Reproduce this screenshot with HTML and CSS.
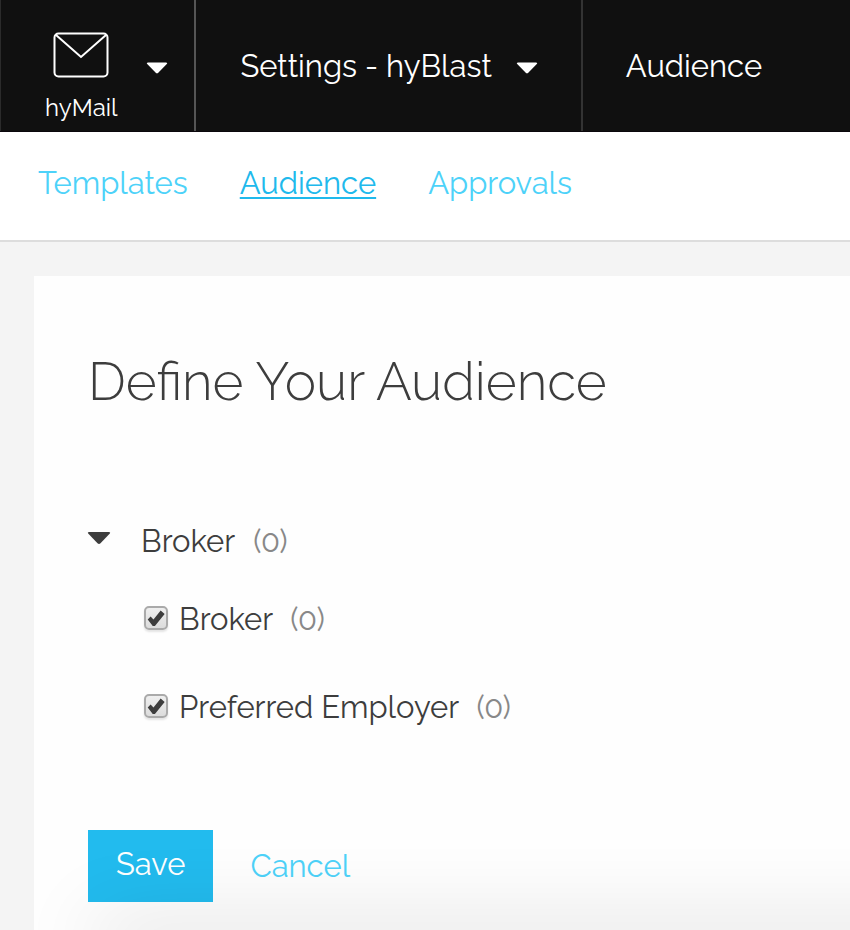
FILE: index.html
```html
<!DOCTYPE html>
<html lang="en">
<head>
    <meta charset="UTF-8">
    <meta name="viewport" content="width=device-width, initial-scale=1.0">
    <title>hyMail - Audience</title>
    <link rel="stylesheet" href="styles.css">
</head>
<body>
    <header class="topbar">
        <button type="button" class="app-menu">
            <span class="app">
                <svg class="mail-icon" viewBox="0 0 56 46" fill="none" stroke="currentColor" stroke-width="2">
                    <rect x="1.5" y="1.5" width="53" height="43" rx="4"/>
                    <path d="M3 3 L28 25 L53 3"/>
                </svg>
                <span class="app-name">hyMail</span>
            </span>
            <svg class="caret" viewBox="0 0 22 12"><path d="M2 0.5 H20 Q22 0.5 20.8 2 L12.5 10.5 Q11 12.2 9.5 10.5 L1.2 2 Q0 0.5 2 0.5 Z"/></svg>
        </button>
        <button type="button" class="section-menu">
            <span>Settings - hyBlast</span>
            <svg class="caret" viewBox="0 0 22 12"><path d="M2 0.5 H20 Q22 0.5 20.8 2 L12.5 10.5 Q11 12.2 9.5 10.5 L1.2 2 Q0 0.5 2 0.5 Z"/></svg>
        </button>
        <div class="page-name">Audience</div>
    </header>

    <nav class="tabs">
        <a href="#">Templates</a>
        <a href="#" class="active">Audience</a>
        <a href="#">Approvals</a>
    </nav>

    <main class="panel">
        <h1>Define Your Audience</h1>
        <form>
            <button type="button" class="group">
                <svg class="caret" viewBox="0 0 22 12"><path d="M1 0 H21 Q23 0 21.6 1.8 L12.5 11.3 Q11 12.8 9.5 11.3 L0.4 1.8 Q-1 0 1 0 Z"/></svg>
                <span class="group-name">Broker</span>
                <span class="count">(0)</span>
            </button>
            <ul class="options">
                <li>
                    <input type="checkbox" id="broker" checked>
                    <label for="broker">Broker <span class="count">(0)</span></label>
                </li>
                <li>
                    <input type="checkbox" id="employer" checked>
                    <label for="employer">Preferred Employer <span class="count">(0)</span></label>
                </li>
            </ul>
            <div class="actions">
                <button type="submit" class="save">Save</button>
                <a href="#">Cancel</a>
            </div>
        </form>
    </main>
    <div class="bottom-shadow"></div>
</body>
</html>
```
FILE: styles.css
```css
* {
    box-sizing: border-box;
}
body {
    margin: 0;
    min-height: 100vh;
    display: flex;
    flex-direction: column;
    overflow-x: hidden;
    background: #f4f4f4;
    color: #3d3d3d;
    font-family: Raleway, Lato, sans-serif;
    font-size: 31px;
    line-height: 40px;
}
button {
    border: 0;
    padding: 0;
    background: none;
    color: inherit;
    font: inherit;
    cursor: pointer;
}
a {
    color: #4dd2f9;
    text-decoration: none;
}
.caret {
    width: 22px;
    height: 12px;
    fill: currentColor;
    overflow: visible;
}

/* top bar */
.topbar {
    display: flex;
    height: 132px;
    background: #101010;
    border-bottom: 1px solid #0b070c;
    color: #fff;
}
.app-menu {
    display: flex;
    align-items: center;
    gap: 29px;
    padding: 4px 26px 0 44px;
    border-left: 1px solid #2b2b2b;
    border-right: 2px solid #555;
}
.app {
    display: flex;
    flex-direction: column;
    align-items: center;
    padding-top: 20px;
}
.mail-icon {
    width: 56px;
    height: 46px;
}
.app-name {
    margin-top: 14px;
    font-size: 24px;
    line-height: 32px;
}
.section-menu {
    display: flex;
    align-items: center;
    gap: 24px;
    padding: 0 43px 0 44px;
    border-right: 2px solid #333;
}
.section-menu .caret {
    margin-top: 4px;
}
.page-name {
    display: flex;
    align-items: center;
    padding: 0 43px;
}

/* tabs */
.tabs {
    display: flex;
    gap: 52px;
    padding: 31px 38px 37px;
    background: #fff;
    border-bottom: 2px solid #ddd;
}
.tabs .active {
    color: #20b9ec;
    text-decoration: underline;
    text-decoration-thickness: 2px;
    text-underline-offset: 3px;
}

/* content */
.panel {
    flex: 1;
    margin: 34px 0 0 34px;
    padding: 73px 54px 28px;
    background: #fefefe;
}
h1 {
    margin: 0 0 108px;
    font-size: 53px;
    line-height: 64px;
    font-weight: 300;
}
.group {
    display: flex;
    align-items: center;
}
.group .caret {
    margin: 0 31px 6px 0;
}
.count {
    margin-left: 18px;
    color: #888;
}
.options {
    display: flex;
    flex-direction: column;
    gap: 48px;
    margin: 38px 0 0;
    padding: 0 0 0 56px;
    list-style: none;
}
.options li {
    display: flex;
    align-items: center;
    gap: 11px;
}
.options .count {
    margin-left: 10px;
}
input[type="checkbox"] {
    appearance: none;
    display: grid;
    place-items: center;
    width: 24px;
    height: 24px;
    margin: 0 0 2px;
    border: 2px solid #aaa;
    border-radius: 5px;
    background: linear-gradient(#efefef, #dcdcdc);
    box-shadow: 0 2px 2px #e4e4e4;
}
input[type="checkbox"]:checked::before {
    content: "";
    width: 18px;
    height: 18px;
    background: #3d3d3d;
    clip-path: polygon(4% 58%, 20% 42%, 36% 58%, 76% 8%, 98% 28%, 44% 94%, 32% 94%);
}
.actions {
    display: flex;
    align-items: center;
    gap: 37px;
    margin-top: 103px;
}
.save {
    padding: 14px 28px 18px;
    background: #22bbee;
    color: #fff;
}
.bottom-shadow {
    position: fixed;
    left: 100px;
    right: -100px;
    bottom: -20px;
    height: 20px;
    box-shadow: 0 0 80px 6px rgba(0, 0, 0, 0.16);
    pointer-events: none;
}
```
